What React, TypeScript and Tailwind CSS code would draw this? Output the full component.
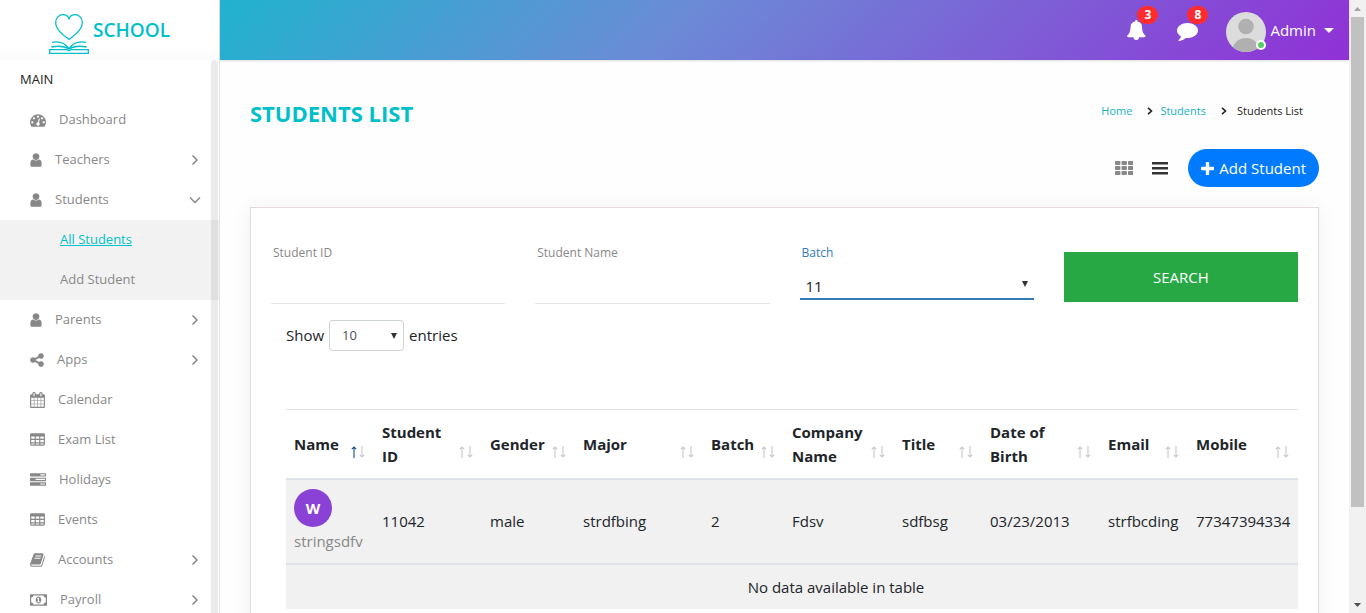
import type { ReactNode } from "react";

const P = {
  user: "M1280 1399q0 109-62.5 187t-150.5 78h-854q-88 0-150.5-78t-62.5-187q0-85 8.5-160.5t31.5-152 58.5-131 94-89 134.5-34.5q131 128 313 128t313-128q76 0 134.5 34.5t94 89 58.5 131 31.5 152 8.5 160.5zm-256-887q0 159-112.5 271.5t-271.5 112.5-271.5-112.5-112.5-271.5 112.5-271.5 271.5-112.5 271.5 112.5 112.5 271.5z",
  dash: "M384 1152q0-53-37.5-90.5t-90.5-37.5-90.5 37.5-37.5 90.5 37.5 90.5 90.5 37.5 90.5-37.5 37.5-90.5zm192-448q0-53-37.5-90.5t-90.5-37.5-90.5 37.5-37.5 90.5 37.5 90.5 90.5 37.5 90.5-37.5 37.5-90.5zm428 481l101-382q6-26-7.5-48.5t-38.5-29.5-48 6.5-30 39.5l-101 382q-60 5-107 43.5t-63 98.5q-20 77 20 146t117 89 146-20 89-117q16-60-6-117t-72-91zm660-33q0-53-37.5-90.5t-90.5-37.5-90.5 37.5-37.5 90.5 37.5 90.5 90.5 37.5 90.5-37.5 37.5-90.5zm-640-640q0-53-37.5-90.5t-90.5-37.5-90.5 37.5-37.5 90.5 37.5 90.5 90.5 37.5 90.5-37.5 37.5-90.5zm448 192q0-53-37.5-90.5t-90.5-37.5-90.5 37.5-37.5 90.5 37.5 90.5 90.5 37.5 90.5-37.5 37.5-90.5zm320 448q0 261-141 483-19 29-54 29h-1402q-35 0-54-29-141-221-141-483 0-182 71-348t191-286 286-191 348-71 348 71 286 191 191 286 71 348z",
  share: "M1216 1024q133 0 226.5 93.5t93.5 226.5-93.5 226.5-226.5 93.5-226.5-93.5-93.5-226.5q0-12 2-34l-360-180q-92 86-218 86-133 0-226.5-93.5t-93.5-226.5 93.5-226.5 226.5-93.5q126 0 218 86l360-180q-2-22-2-34 0-133 93.5-226.5t226.5-93.5 226.5 93.5 93.5 226.5-93.5 226.5-226.5 93.5q-126 0-218-86l-360 180q2 22 2 34t-2 34l360 180q92-86 218-86z",
  table: "M160 128h1344q66 0 113 47t47 113v1088q0 66-47 113t-113 47h-1344q-66 0-113-47t-47-113v-1088q0-66 47-113t113-47zM128 544v192q0 32 32 32h320q32 0 32-32v-192q0-32-32-32h-320q-32 0-32 32zM128 928v192q0 32 32 32h320q32 0 32-32v-192q0-32-32-32h-320q-32 0-32 32zM128 1280v96q0 32 32 32h320q32 0 32-32v-96h-384zM640 544v192q0 32 32 32h320q32 0 32-32v-192q0-32-32-32h-320q-32 0-32 32zM640 928v192q0 32 32 32h320q32 0 32-32v-192q0-32-32-32h-320q-32 0-32 32zM640 1280v96q0 32 32 32h320q32 0 32-32v-96h-384zM1152 544v192q0 32 32 32h320q32 0 32-32v-192q0-32-32-32h-320q-32 0-32 32zM1152 928v192q0 32 32 32h320q32 0 32-32v-192q0-32-32-32h-320q-32 0-32 32zM1152 1280v96q0 32 32 32h320q32 0 32-32v-96h-384z",
  calendar: "M128 1664h288v-288h-288v288zM480 1664h320v-288h-320v288zM128 1312h288v-320h-288v320zM480 1312h320v-320h-320v320zM128 928h288v-288h-288v288zM864 1664h320v-288h-320v288zM480 928h320v-288h-320v288zM1248 1664h288v-288h-288v288zM864 1312h320v-320h-320v320zM512 448v-288q0-32-32-32h-64q-32 0-32 32v288q0 32 32 32h64q32 0 32-32zM1248 1312h288v-320h-288v320zM864 928h320v-288h-320v288zM1248 928h288v-288h-288v288zM1280 448v-288q0-32-32-32h-64q-32 0-32 32v288q0 32 32 32h64q32 0 32-32zM1664 384v1280q0 52-38 90t-90 38h-1408q-52 0-90-38t-38-90v-1280q0-52 38-90t90-38h128v-96q0-66 47-113t113-47h64q66 0 113 47t47 113v96h384v-96q0-66 47-113t113-47h64q66 0 113 47t47 113v96h128q52 0 90 38t38 90z",
  tasks: "M64 128h1664q64 0 64 64v256q0 64-64 64h-1664q-64 0-64-64v-256q0-64 64-64zM1152 256v128h512v-128zM64 640h1664q64 0 64 64v256q0 64-64 64h-1664q-64 0-64-64v-256q0-64 64-64zM640 768v128h1024v-128zM64 1152h1664q64 0 64 64v256q0 64-64 64h-1664q-64 0-64-64v-256q0-64 64-64zM1152 1280v128h512v-128z",
  book: "M1639 478q40 57 18 129l-275 906q-19 64-76.5 107.5t-122.5 43.5h-923q-77 0-148.5-53.5t-99.5-131.5q-24-67-2-127 0-4 3-27t4-37q1-8-3-21.5t-3-19.5q2-11 8-21t16.5-23.5 16.5-23.5q23-38 45-91.5t30-91.5q3-10 .5-30t-.5-28q3-11 17-28t17-23q21-36 42-92t25-90q1-9-2.5-32t.5-28q4-13 22-30.5t22-22.5q19-26 42.5-84.5t27.5-96.5q1-8-3-25.5t-2-26.5q2-8 9-18t18-23 17-21q8-12 16.5-30.5t15-35 16-36 19.5-32 26.5-23.5 36-11.5 47.5 5.5l-1 3q38-9 51-9h761q74 0 114 56t18 130l-274 906q-36 119-71.5 153.5t-128.5 34.5h-869q-27 0-38 15-11 16-1 43 24 70 144 70h923q29 0 56-15.5t35-41.5l300-987q7-22 5-57 38 15 59 43zm-1064 2q-4 13 2 22.5t20 9.5h608q13 0 25.5-9.5t16.5-22.5l21-64q4-13-2-22.5t-20-9.5h-608q-13 0-25.5 9.5t-16.5 22.5zm-83 256q-4 13 2 22.5t20 9.5h608q13 0 25.5-9.5t16.5-22.5l21-64q4-13-2-22.5t-20-9.5h-608q-13 0-25.5 9.5t-16.5 22.5z",
  money: "M64 256h1792q64 0 64 64v1152q0 64-64 64h-1792q-64 0-64-64v-1152q0-64 64-64zM384 384q0 106-75 181t-181 75v512q106 0 181 75t75 181h1152q0-106 75-181t181-75v-512q-106 0-181-75t-75-181zM960 512c177 0 320 150 320 384s-143 384-320 384-320-150-320-384 143-384 320-384zM768 1152h384v-96h-128v-448h-114l-148 137 77 80 55-48v279h-128z",
  bell: "M1664 1408q0 52-38 90t-90 38h-448q0 106-75 181t-181 75-181-75-75-181h-448q-52 0-90-38t-38-90q50-42 91-88t85-119.5 74.5-158.5 50-206 19.5-260q0-152 117-282.5t307-158.5q-8-19-8-39 0-40 28-68t68-28 68 28 28 68q0 20-8 39 190 28 307 158.5t117 282.5q0 139 19.5 260t50 206 74.5 158.5 85 119.5 91 88z",
  comment: "M1792 896q0 174-120 321.5t-326 233-450 85.5q-70 0-145-8-198 175-460 242-49 14-114 22-17 2-30.5-9t-17.5-29v-1q-3-4-.5-12t2-10 4.5-9.500l6-9 7-8.5 8-9q7-8 31-34.5t34.5-38 31-39.5 32.5-51 27-59 26-76q-157-89-247.5-220t-90.5-281q0-130 71-248.5t191-204.5 286-136.5 348-50.500q244 0 450 85.5t326 233 120 321.5z",
};

function Glyph({ d, units, className }: { d: string; units: number; className: string }) {
  return (
    <svg aria-hidden="true" viewBox={`0 0 ${units} 1792`} className={className} fill="currentColor" fillRule="evenodd">
      <path d={d} />
    </svg>
  );
}

function Chevron({ open }: { open?: boolean }) {
  return (
    <svg aria-hidden="true" viewBox="0 0 12 12" className="ml-auto h-3 w-3" fill="none" stroke="currentColor" strokeWidth="1.5">
      <path d={open ? "M1 3.5 6 8.500 11 3.500" : "M3.500 1.500 8 6 3.500 10.500"} />
    </svg>
  );
}

type Item = { label: string; d: string; units: number; size: string; arrow?: boolean; children?: string[] };

const items: Item[] = [
  { label: "Dashboard", d: P.dash, units: 1792, size: "h-4 w-4" },
  { label: "Teachers", d: P.user, units: 1280, size: "h-4 w-3", arrow: true },
  { label: "Students", d: P.user, units: 1280, size: "h-4 w-3", arrow: true, children: ["All Students", "Add Student"] },
  { label: "Parents", d: P.user, units: 1280, size: "h-4 w-3", arrow: true },
  { label: "Apps", d: P.share, units: 1536, size: "h-4 w-[14px]", arrow: true },
  { label: "Calendar", d: P.calendar, units: 1664, size: "h-4 w-[15px]" },
  { label: "Exam List", d: P.table, units: 1664, size: "h-4 w-[15px]" },
  { label: "Holidays", d: P.tasks, units: 1792, size: "h-4 w-4" },
  { label: "Events", d: P.table, units: 1664, size: "h-4 w-[15px]" },
  { label: "Accounts", d: P.book, units: 1664, size: "h-4 w-[15px]", arrow: true },
  { label: "Payroll", d: P.money, units: 1920, size: "h-4 w-[17px]", arrow: true },
];

function Logo() {
  return (
    <svg aria-hidden="true" viewBox="0 0 40 40" className="mt-2 h-10 w-10" fill="none" stroke="#00c0c9" strokeWidth="1.300">
      <path d="M20 25.500C15 21.500 6.700 16 6.700 8.500 6.700 4 10 .7 14 .7c2.800 0 5 1.600 6 4 1-2.400 3.200-4 6-4 4 0 7.300 3.300 7.300 7.800 0 7.500-8.300 13-13.300 17z" />
      <path d="M.7 35.600h16.800c1.300 0 1.700 1 2.500 1s1.200-1 2.500-1h16.800v3.700H.7z" />
      <path d="M3 28.300c7-1.400 13 .6 17 6.300 4-5.700 10-7.700 17-6.300M2.400 33c7-1.400 13-1 17.600 2 4.600-3 10.600-3.400 17.600-2" />
    </svg>
  );
}

function Sidebar() {
  return (
    <aside className="flex w-[220px] shrink-0 flex-col border-r border-[#e4e4e4] bg-white">
      <a href="#home" className="flex h-[60px] shrink-0 items-center gap-1 bg-gradient-to-b from-white from-80% to-[#fafafa] pl-[49px] text-[19px] font-semibold text-[#00c0c9]">
        <Logo />
        SCHOOL
      </a>
      <div className="relative min-h-0 grow overflow-hidden">
        <nav className="text-[13px] text-[#888]">
          <div className="flex h-10 items-center pl-5 text-[#222]">MAIN</div>
          <ul>
            {items.map((it) => (
              <li key={it.label}>
                <a href={`#${it.label}`} className="flex h-10 items-center gap-[13px] pr-[18px] pl-[30px]">
                  <Glyph d={it.d} units={it.units} className={`${it.size} shrink-0`} />
                  {it.label}
                  {it.arrow && <Chevron open={!!it.children} />}
                </a>
                {it.children && (
                  <ul className="bg-[#f2f2f2]">
                    {it.children.map((c, i) => (
                      <li key={c}>
                        <a
                          href={`#${c}`}
                          className={i === 0 ? "flex h-10 items-center pl-[60px] text-[#00c0c9] underline" : "flex h-10 items-center pl-[60px]"}
                        >
                          {c}
                        </a>
                      </li>
                    ))}
                  </ul>
                )}
              </li>
            ))}
          </ul>
        </nav>
        <div className="absolute top-0 right-px bottom-0 w-[7px] rounded-t bg-black/[0.08]" />
      </div>
    </aside>
  );
}

function Alert({ label, count, children }: { label: string; count: number; children: ReactNode }) {
  return (
    <button type="button" aria-label={label} className="relative flex h-[22px] w-[22px] items-center justify-center">
      {children}
      <span className="absolute -top-[13px] left-[11px] flex h-[18px] w-[21px] items-center justify-center rounded-full bg-[#ff2c2f] text-[12px] font-bold">
        {count}
      </span>
    </button>
  );
}

function TopBar() {
  return (
    <header className="z-10 flex h-[60px] shrink-0 items-center justify-end bg-[linear-gradient(135deg,#20b2ce_0%,#6b8bd6_40%,#9031d6_100%)] pr-[15px] text-white shadow">
      <div className="flex gap-7">
        <Alert label="Notifications" count={3}>
          <Glyph d={P.bell} units={1792} className="h-5 w-5" />
        </Alert>
        <Alert label="Messages" count={8}>
          <Glyph d={P.comment} units={1792} className="h-[21px] w-[21px]" />
        </Alert>
      </div>
      <button type="button" className="ml-7 flex items-center gap-1 text-[15px]">
        <span className="relative mt-1">
          <svg aria-hidden="true" viewBox="0 0 40 40" className="h-10 w-10 rounded-full">
            <rect width="40" height="40" fill="#dcdcdc" />
            <circle cx="20" cy="14.500" r="7.800" fill="#b0b0b0" />
            <ellipse cx="20" cy="40" rx="14" ry="14" fill="#b0b0b0" />
          </svg>
          <span className="absolute right-0 bottom-[2px] h-[10px] w-[10px] rounded-full border-2 border-white bg-[#55ce63]" />
        </span>
        Admin
        <svg aria-hidden="true" viewBox="0 0 10 5" className="ml-1 h-[5px] w-[10px]" fill="currentColor">
          <path d="M0 0h10L5 5z" />
        </svg>
      </button>
    </header>
  );
}

function Crumb() {
  return (
    <svg aria-hidden="true" viewBox="0 0 6 8" className="h-2 w-[6px]" fill="none" stroke="#222" strokeWidth="1.600">
      <path d="M1 .8 4.500 4 1 7.200" />
    </svg>
  );
}

function Heading() {
  return (
    <>
      <div className="flex h-7 items-center justify-between pr-4">
        <h1 className="text-[22px] leading-[26px] font-bold text-[#00c0c9]">STUDENTS LIST</h1>
        <nav aria-label="Breadcrumb" className="flex items-center pb-1 text-[11px] text-[#1ab0c0]">
          <a href="#home">Home</a>
          <span className="mr-[7px] ml-[15px]"><Crumb /></span>
          <a href="#students">Students</a>
          <span className="mr-[10px] ml-[15px]"><Crumb /></span>
          <span className="text-[#222]">Students List</span>
        </nav>
      </div>
      <div className="mt-[22px] flex items-center justify-end">
        <button type="button" aria-label="Grid view" className="text-[#888]">
          <svg aria-hidden="true" viewBox="0 0 18 14" className="h-[14px] w-[18px]" fill="currentColor">
            {[0, 5, 10].map((y) => [0, 6.5, 13].map((x) => <rect key={`${x}-${y}`} x={x} y={y} width="5.400" height="4" rx=".8" />))}
          </svg>
        </button>
        <button type="button" aria-label="List view" className="ml-[19px] text-[#333]">
          <svg aria-hidden="true" viewBox="0 0 16 14" className="h-[14px] w-4" fill="currentColor">
            <path d="M0 1h16v2.500H0zM0 6h16v2.500H0zM0 11h16v2.500H0z" />
          </svg>
        </button>
        <button type="button" className="ml-5 flex h-[38px] items-center gap-[5px] rounded-full bg-[#007bff] px-[13px] text-[15px] text-white">
          <svg aria-hidden="true" viewBox="0 0 13 13" className="h-[13px] w-[13px]" fill="currentColor">
            <path d="M4.800 .8q0-.8.8-.8h1.800q.8 0 .8.8V4.800h4q.8 0 .8.8v1.800q0 .8-.8.8H8.200v4q0 .8-.8.8H5.600q-.8 0-.8-.8v-4H.8Q0 8.200 0 7.400V5.600Q0 4.800 .8 4.800h4z" />
          </svg>
          Add Student
        </button>
      </div>
    </>
  );
}

function Arrow() {
  return (
    <svg aria-hidden="true" viewBox="0 0 6 6" className="h-[6px] w-[6px]" fill="#333">
      <path d="M0 0h6L3 6z" />
    </svg>
  );
}

function TextField({ id, label }: { id: string; label: string }) {
  return (
    <div className="flex h-[60px] flex-col border-b border-[#e4e4e4]">
      <label htmlFor={id} className="pl-[2px] text-[12px] leading-[18px] text-[#888]">{label}</label>
      <input id={id} className="w-full grow bg-transparent px-[6px] text-[15px] outline-none" />
    </div>
  );
}

function Filters() {
  return (
    <form className="grid grid-cols-4 items-start gap-x-[30px]" onSubmit={(e) => e.preventDefault()}>
      <TextField id="sid" label="Student ID" />
      <TextField id="sname" label="Student Name" />
      <div className="flex h-14 flex-col justify-between border-b-2 border-[#337ab7]">
        <label htmlFor="batch" className="pl-[2px] text-[12px] leading-[18px] text-[#337ab7]">Batch</label>
        <div className="grid h-7 grid-cols-[1fr_auto] items-center">
          <select id="batch" defaultValue="11" className="col-span-2 col-start-1 row-start-1 w-full appearance-none bg-transparent pt-1 pl-[6px] text-[15px] text-[#222] outline-none">
            <option>11</option>
            <option>12</option>
          </select>
          <span className="pointer-events-none col-start-2 row-start-1 pr-[6px]"><Arrow /></span>
        </div>
      </div>
      <button type="submit" className="mt-2 h-[50px] bg-[#28a745] text-[15px] text-white">SEARCH</button>
    </form>
  );
}

const columns = [
  { name: "Name", w: "w-[88px]", v: "" },
  { name: "Student ID", w: "w-[108px]", v: "11042" },
  { name: "Gender", w: "w-[93px]", v: "male" },
  { name: "Major", w: "w-[128px]", v: "strdfbing" },
  { name: "Batch", w: "w-[81px]", v: "2" },
  { name: "Company Name", w: "w-[110px]", v: "Fdsv" },
  { name: "Title", w: "w-[88px]", v: "sdfbsg" },
  { name: "Date of Birth", w: "w-[118px]", v: "03/23/2013" },
  { name: "Email", w: "w-[88px]", v: "strfbcding" },
  { name: "Mobile", w: "w-[110px]", v: "77347394334" },
];

function SortMarks({ active }: { active: boolean }) {
  return (
    <svg aria-hidden="true" viewBox="0 0 14 12" className="absolute right-[9px] bottom-5 h-3 w-[14px]" fill="none" strokeWidth="1.100">
      <path d="M3 12V1M.8 3.200 3 1l2.200 2.200" stroke={active ? "#1c4f91" : "#c8c8c8"} />
      <path d="M11 0v11M8.800 8.800 11 11l2.200-2.200" stroke="#c8c8c8" />
    </svg>
  );
}

function StudentTable() {
  return (
    <table className="mt-[58px] w-full table-fixed border-collapse text-left text-[15px] leading-6 text-[#212529]">
      <thead>
        <tr className="h-[69px] border-t border-b-2 border-t-[#dee2e6] border-b-[#dee2e6]">
          {columns.map((c, i) => (
            <th key={c.name} scope="col" className={`${c.w} relative pr-[26px] pl-2 align-middle font-bold`}>
              {c.name}
              <SortMarks active={i === 0} />
            </th>
          ))}
        </tr>
      </thead>
      <tbody className="bg-[#f1f1f1]">
        <tr className="h-[85px] border-b-2 border-[#dee2e6]">
          <td className="pl-2">
            <a href="#student" className="block text-[#888]">
              <span className="flex h-[38px] w-[38px] items-center justify-center rounded-full bg-[#8a42d6] font-bold text-white">W</span>
              <span className="block pt-[2px]">stringsdfv</span>
            </a>
          </td>
          {columns.slice(1).map((c) => (
            <td key={c.name} className="pl-2 whitespace-nowrap">{c.v}</td>
          ))}
        </tr>
        <tr className="h-[45px]">
          <td colSpan={10} className="pl-[88px] text-center">No data available in table</td>
        </tr>
      </tbody>
    </table>
  );
}

function Scrollbar() {
  return (
    <div aria-hidden="true" className="flex w-[17px] shrink-0 flex-col items-center bg-[#f1f1f1]">
      <svg viewBox="0 0 17 17" className="h-[17px] w-[17px]"><path d="M5 11h7L8.500 7z" fill="#a3a3a3" /></svg>
      <div className="w-[13px] basis-[490px] bg-[#c1c1c1]" />
      <svg viewBox="0 0 17 17" className="mt-auto h-[17px] w-[17px]"><path d="M5 7h7l-3.500 4z" fill="#505050" /></svg>
    </div>
  );
}

export default function App() {
  return (
    <div className="flex h-screen overflow-hidden bg-[#fefefe] font-['Open_Sans','Noto_Sans',sans-serif]">
      <Sidebar />
      <div className="flex min-w-0 grow flex-col">
        <TopBar />
        <main className="min-h-0 grow overflow-hidden px-[30px] pt-[39px]">
          <Heading />
          <section className="mt-5 min-h-full border border-[#e3d8dc] bg-white px-5 pt-9 shadow-[0_0_20px_rgba(0,0,0,0.06)]">
            <Filters />
            <div className="mt-4 pl-[15px]">
              <label className="flex items-center gap-[5px] text-[15px] text-[#212529]">
                Show
                <span className="grid w-[75px] grid-cols-[1fr_auto] items-center">
                  <select defaultValue="10" className="col-span-2 col-start-1 row-start-1 h-[31px] w-full appearance-none rounded-[3px] border border-[#ced4da] bg-white pl-3 text-[13px] text-[#495057]">
                    <option>10</option>
                    <option>25</option>
                  </select>
                  <span className="pointer-events-none z-10 col-start-2 row-start-1 pr-[7px]"><Arrow /></span>
                </span>
                entries
              </label>
              <StudentTable />
            </div>
          </section>
        </main>
      </div>
      <Scrollbar />
    </div>
  );
}
